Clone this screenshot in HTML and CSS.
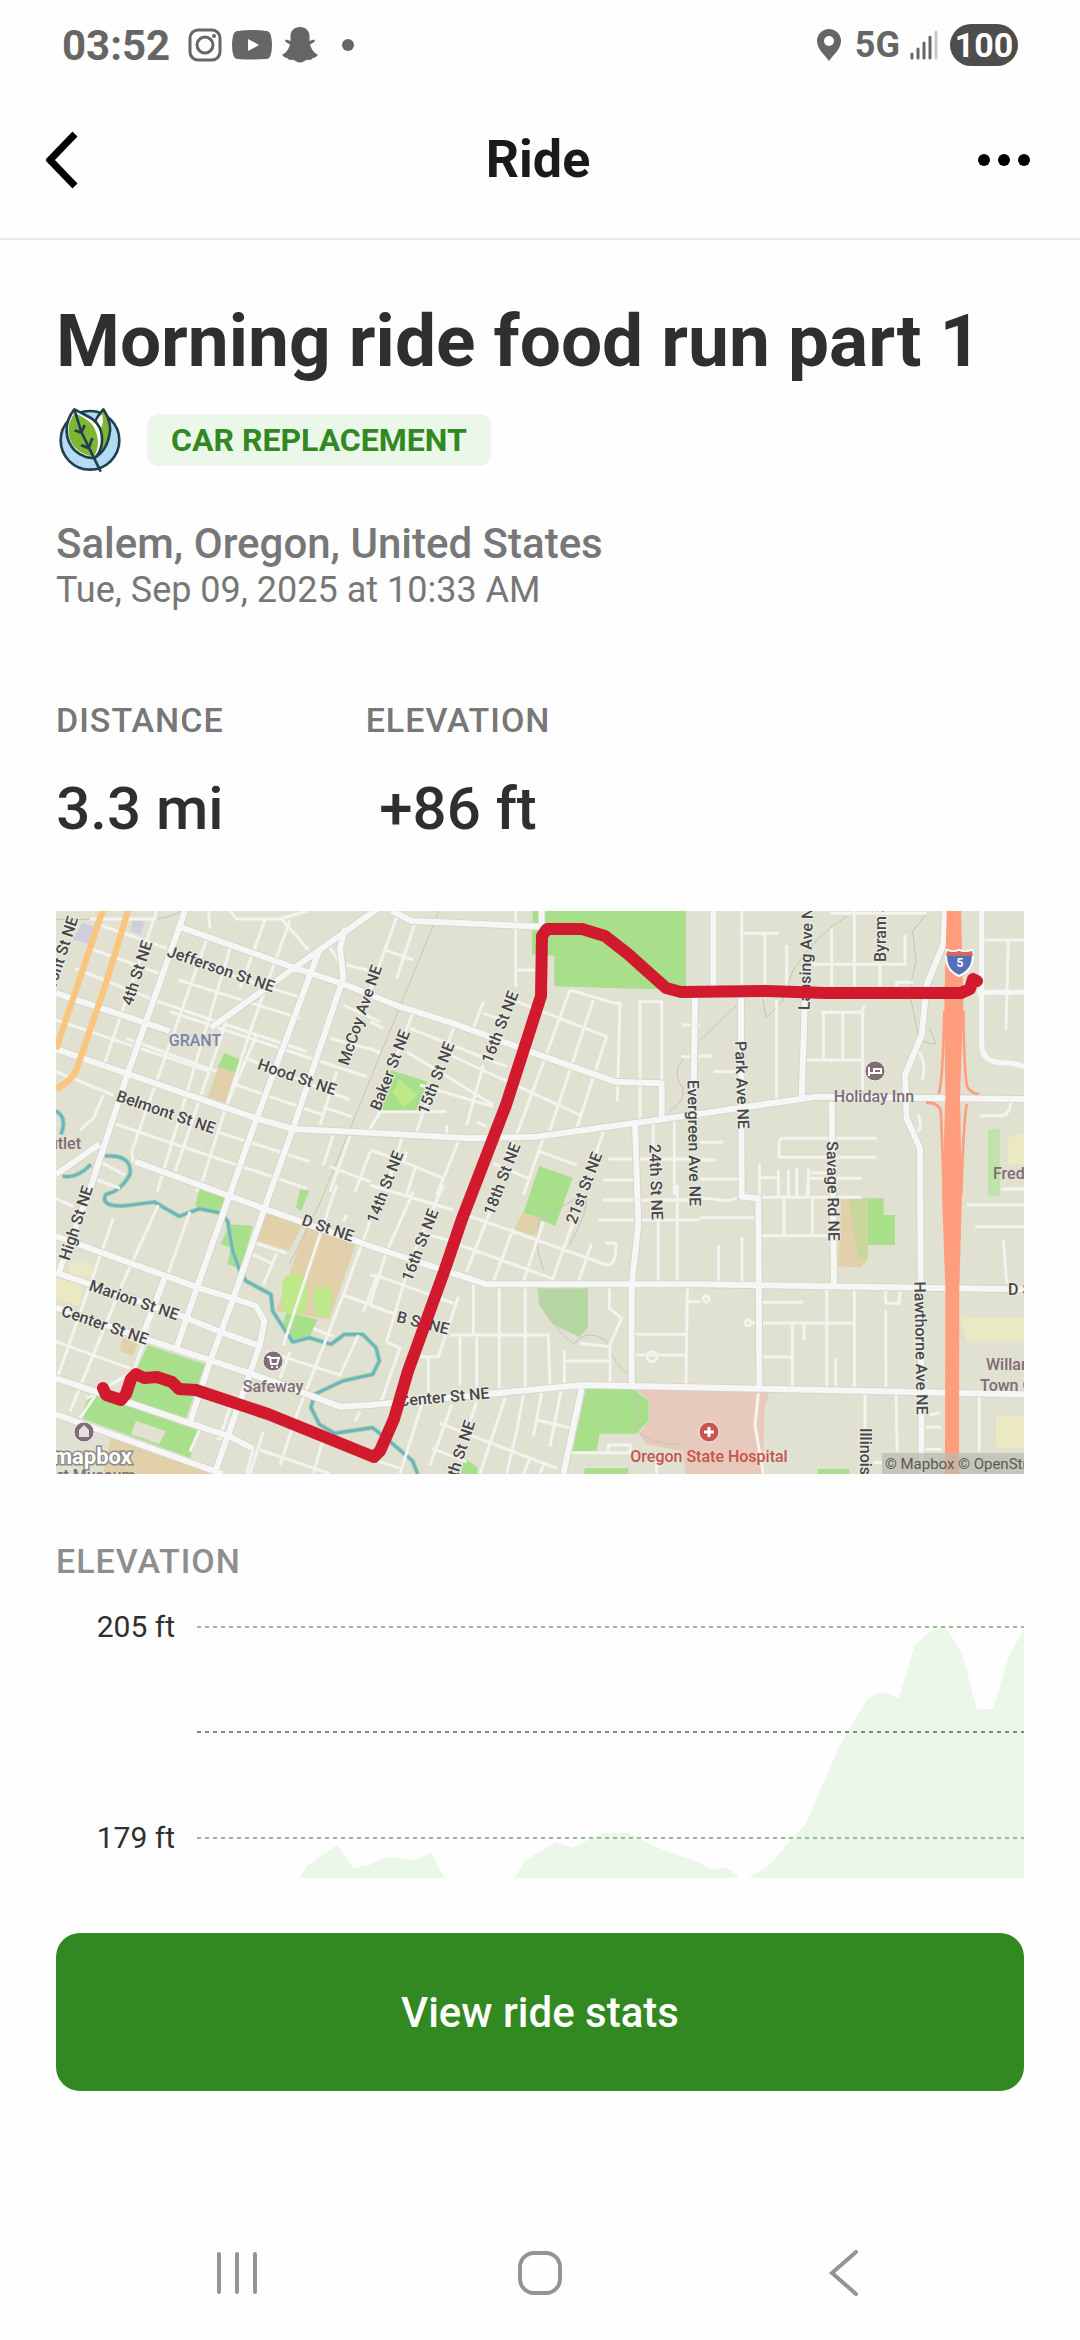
FILE: index.html
```html
<!DOCTYPE html>
<html lang="en">
<head>
    <meta charset="UTF-8">
    <meta name="viewport" content="width=device-width, initial-scale=1.0">
    <title>Ride</title>
    <link rel="stylesheet" href="styles.css">
</head>
<body>
    <div class="status-bar">
        <div class="status-left">
            <span class="clock">03:52</span>
            <svg width="34" height="34" viewBox="0 0 34 34" fill="none" stroke="#666" stroke-width="3"><rect x="2" y="2" width="30" height="30" rx="8"/><circle cx="17" cy="17" r="8"/><circle cx="26" cy="8" r="2" fill="#666" stroke="none"/></svg>
            <svg width="40" height="30" viewBox="0 0 40 30"><path d="M6 1Q20-1 34 1Q38 1 39 6Q41 15 39 24Q38 29 34 29Q20 30 6 29Q2 29 1 24Q-1 15 1 6Q2 1 6 1Z" fill="#666"/><path d="M16 9L27 15L16 21Z" fill="#fff"/></svg>
            <svg width="36" height="36" viewBox="0 0 36 36" fill="#666"><path d="M18 0C24 0 27.500 4 27.500 9V14L32 12.500Q34 14 31.500 15.500L28 17.500Q30 25 36 28Q34 31 30 31.500L29 33Q25 32 22.500 34Q18 37 13.500 34Q11 32 7 33L6 31.500Q2 31 0 28Q6 25 8 17.500L4.500 15.500Q2 14 4 12.500L8.500 14V9C8.500 4 12 0 18 0Z"/></svg>
            <span class="more-dot"></span>
        </div>
        <div class="status-right">
            <svg width="24" height="32" viewBox="0 0 24 32"><path d="M12 0A12 12 0 0 0 0 12C0 20 7 25 12 32C17 25 24 20 24 12A12 12 0 0 0 12 0Z" fill="#666"/><circle cx="12" cy="12" r="5" fill="#fff"/></svg>
            <span class="network">5G</span>
            <svg class="signal" width="28" height="30" viewBox="0 0 28 30" stroke="#666" stroke-width="3" stroke-linecap="round"><path d="M2 24V28M8 19V28M14 13V28M20 7V28"/><path d="M26 2V28" stroke="#c8c8c8"/></svg>
            <span class="battery">100</span>
        </div>
    </div>

    <header>
        <button class="icon-button" type="button" aria-label="Back">
            <svg width="32" height="58" viewBox="0 0 32 58" fill="none" stroke="#000" stroke-width="7"><path d="M29 3L4 29L29 55"/></svg>
        </button>
        <h1>Ride</h1>
        <button class="icon-button" type="button" aria-label="More options">
            <svg width="52" height="12" viewBox="0 0 52 12"><circle cx="6" cy="6" r="6"/><circle cx="26" cy="6" r="6"/><circle cx="46" cy="6" r="6"/></svg>
        </button>
    </header>

    <main>
        <h2>Morning ride food run part 1</h2>
        <div class="tags">
            <svg width="68" height="68" viewBox="49 48 204 204" stroke="#223f52" stroke-width="8" stroke-linejoin="round">
                <circle cx="151" cy="151" r="88" fill="#b3dcf3"/>
                <path d="M191 58C211 88 216 115 208 140C200 175 185 190 166 203C140 170 155 95 191 58Z" fill="#80b732"/>
                <path d="M188 72C160 95 168 115 180 130L190 95Z" fill="#fff" stroke="none"/>
                <path d="M104 58C70 100 76 150 104 180C125 200 150 206 166 203C190 180 192 140 180 113C165 83 140 78 104 58Z" fill="#fff"/>
                <path d="M106 68C77 105 82 150 110 176C128 192 150 200 164 198C182 165 175 135 162 110C148 88 125 80 106 68Z" fill="#80b732" stroke="none"/>
                <path d="M104 58L125 126L183 245M105 121L125 128L135 105M124 165L147 175L158 144" fill="none"/>
            </svg>
            <span class="badge">CAR REPLACEMENT</span>
        </div>
        <p class="place">Salem, Oregon, United States</p>
        <p class="date">Tue, Sep 09, 2025 at 10:33 AM</p>

        <div class="totals">
            <div class="total">
                <h3>DISTANCE</h3>
                <p>3.3 mi</p>
            </div>
            <div class="total">
                <h3>ELEVATION</h3>
                <p>+86 ft</p>
            </div>
        </div>

        <svg class="map" viewBox="0 0 968 563" role="img" aria-label="Map of the ride">
            <svg width="968" height="563" viewBox="0 0 2904 1689">
                <rect width="2904" height="1689" fill="#e0e1d1"/>

                <!-- parks and areas -->
                <g fill="#a7df8a">
                    <path d="M1430 0H1890V236L1690 232L1495 226V134L1428 130Z"/>
                    <path d="M505 425L553 447L538 485L485 468Z"/>
                    <path d="M1005 478L1115 512L1080 602H978L990 520Z"/>
                    <path d="M1450 765L1550 800L1498 945L1402 905Z"/>
                    <path d="M430 828L507 850L500 905L418 885ZM732 835L760 840L735 900L720 890ZM520 940L590 945L555 1075L515 1060L525 1010L494 1000Z"/>
                    <path d="M275 1302L447 1360L388 1525L205 1460ZM100 1445L430 1560L402 1640L75 1520Z"/>
                    <path d="M692 1205L785 1225L760 1280L710 1290L680 1240Z"/>
                    <path d="M1590 1432H1730L1778 1470V1530L1740 1568H1630L1622 1620H1550ZM1585 1672H1717V1689H1585ZM1225 1640L1265 1670V1689H1215Z"/>
                    <path d="M2435 862H2483V912H2517V1002H2435Z"/>
                    <path d="M2285 1674H2380V1689H2285Z"/>
                </g>
                <path d="M1445 1132H1596V1250L1570 1278L1490 1240L1448 1180Z" fill="#b7d7a2"/>
                <path d="M2797 655H2832V855H2797Z" fill="#bfe3a8"/>
                <path d="M1742 1435L2140 1440L2125 1500L2120 1689H1890L1880 1620L1770 1600L1750 1568L1780 1530V1470Z" fill="#e7cabc"/>
                <g fill="#e1d0aa">
                    <path d="M486 468L538 485L512 575L455 562ZM630 900L740 940L700 1018L605 990ZM750 950L900 998L820 1225L660 1200ZM165 1580L460 1675V1689H140ZM200 1280L245 1300L230 1335L192 1320ZM1400 905L1455 920L1435 975L1375 955Z"/>
                    <path d="M2355 862H2435V1048L2410 1070L2345 1066Z"/>
                </g>
                <path d="M2380 862H2435V1045H2410Q2385 960 2380 862Z" fill="#c9d69c"/>
                <g fill="#bde98a"><rect x="678" y="1088" width="75" height="125" rx="35"/><path d="M770 1130H830L820 1220L778 1210Z"/><path d="M1030 505L1085 550L1045 590L1010 545Z"/></g>
                <g fill="#ebe8c4"><path d="M2855 680L2904 665V760H2855ZM2715 1220H2904V1290H2730ZM2820 1515H2904V1610H2820ZM0 1100L80 1125L70 1185L0 1165ZM40 1055H110V1095L40 1090Z"/></g>
                <path d="M80 35L122 50L100 100L50 85ZM230 25L265 30L255 72L225 60Z" fill="#cfcedd"/>
                <path d="M240 1530L330 1560L310 1600L225 1570Z" fill="#e0e1d1"/>

                <!-- creek -->
                <g fill="none" stroke-linejoin="round">
                    <path d="M0 600Q35 620 15 670M20 795Q60 805 105 760M145 735Q230 730 222 790Q195 840 150 850Q130 885 200 885L295 873L370 916L430 893L490 905L515 930L530 1020L550 1075L570 1110L645 1150L650 1200L710 1293L760 1280L825 1300L865 1270H920L960 1310L970 1350L950 1390L860 1410L775 1450L765 1490L790 1540L835 1567L950 1550L1000 1590L1070 1650L1085 1689" stroke="#a0d596" stroke-width="14"/>
                    <path d="M0 600Q35 620 15 670M20 795Q60 805 105 760M145 735Q230 730 222 790Q195 840 150 850Q130 885 200 885L295 873L370 916L430 893L490 905L515 930L530 1020L550 1075L570 1110L645 1150L650 1200L710 1293L760 1280L825 1300L865 1270H920L960 1310L970 1350L950 1390L860 1410L775 1450L765 1490L790 1540L835 1567L950 1550L1000 1590L1070 1650L1085 1689" stroke="#6cb0cf" stroke-width="8"/>
                </g>

                <!-- trails and rail -->
                <g fill="none" stroke="#c4c5b8" stroke-width="3">
                    <path d="M0 25H290Q350 20 375 0M1149 0L790 880L700 1060M1540 1000Q1600 900 1590 850L1555 865L1450 925Q1430 1000 1465 1080M1450 1150Q1500 1270 1555 1298Q1590 1250 1650 1290Q1680 1370 1715 1387M1745 1440V1560Q1780 1600 1875 1600"/>
                    <path d="M2375 15Q2290 60 2210 180L2180 270L2130 320L2120 260M2040 285L1950 370L1930 390M2610 10L2570 60L2580 150L2560 240L2590 390L2640 400L2620 350M1895 430Q1840 480 1880 530Q1890 570 1840 600"/>
                </g>

                <!-- small streets -->
                <g fill="none" stroke="#f3f3ef" stroke-width="9">
                    <g transform="translate(-18 -18)">
                        <path d="M320 18L165 470M475 90L245 740L250 770M540 130L322 860M645 45L570 250M530 345L375 800M720 45L600 380L450 850M620 390L530 600M475 18L480 70M540 18L560 42H690L770 18M695 42L775 135M120 42H320"/>
                        <path d="M150 60L350 130M120 130L345 212M75 190L325 290L770 440M18 345L180 400L480 500M230 400L500 500M385 225L750 340M370 155L760 280M360 320L600 400L950 515M18 500L190 570M160 570L130 640L90 675M190 655L770 850M500 680L780 770M560 540L820 630M590 460L900 585M890 180L990 205M880 300L990 350M840 400L990 440M830 610L905 635M850 690L820 780M900 690L840 860M960 740L915 860M840 785L960 830M860 500L810 660M990 620L950 690M150 770L225 810M130 820L210 850M835 120L880 190"/>
                    </g>
                    <g transform="translate(942 -18)">
                        <path d="M80 35L0 260M135 55L80 220M45 135L130 165M437 18V245M437 195H500M340 290L310 370M340 325L400 345M440 290L710 395L620 670M600 255L440 690M670 285L535 690M600 255L735 295H750L742 590M810 650V290H875V530M130 320L80 450M250 370L225 440M120 370L410 485M110 440L370 600M240 450L630 630M150 540L370 605M340 480L290 660M180 560L140 680M30 620H230M230 660V690M320 650L350 665M0 735L100 770L220 820M95 700L50 850M265 710L200 870M135 790L110 870M110 740L100 775M370 775L475 820M510 740L620 780M520 700L460 870M430 710L410 760M700 680L670 770M850 650V740M913 650V870M715 762H990M700 825H790M935 360H990M935 455H990M0 350L40 370M0 430L30 445"/>
                    </g>
                    <g transform="translate(1932 -18)">
                        <path d="M125 18V250M130 85H235M195 85V245M260 120V245M395 70V245M463 18V245M330 178H615V90M540 178V245M390 25H680M590 245V232H640M230 285V580M370 460V322H485L495 300M428 322V460M315 465H488V555M488 322V465M655 440Q680 470 668 525M0 453H35M40 500H110M0 712H70M0 765H45M0 822H120M530 700H250Q237 700 237 720V757H530M178 775V870M178 818H235M235 795V870M265 795V870M290 790V870M325 790V870M325 803H400M325 820H485M855 105H972M925 105L918 375M933 590Q930 632 900 632H840M655 630Q670 670 650 680M905 852H972"/>
                    </g>
                    <g transform="translate(-18 822)">
                        <path d="M190 100L25 570M325 60L220 290L60 680M420 80L300 420M350 280L250 560L110 640M150 610L90 700M18 40L70 65M450 0L440 20M620 175L710 205M600 205L665 235M680 205L640 300M860 0L700 480M890 90L880 110M960 110L880 330L740 690L690 840M880 330L990 370M790 430L850 455M650 500L870 570L925 450M720 500L690 580M18 470L240 550M480 540L410 720M560 760L500 760M610 790L590 866M630 795L840 866M640 740L600 866M820 760L790 866M930 680L915 710M450 730L420 800M540 665L510 760M600 560L740 620"/>
                    </g>
                    <g transform="translate(942 822)">
                        <path d="M0 0L250 75M220 0L120 230L50 470L90 490L30 660M130 20L50 200L0 360M0 270L30 275L250 355M265 335L205 515H150M20 275L-20 380M0 360L80 390M290 90L710 240Q740 240 738 175H705M270 180L545 280M360 80L290 260M430 130L370 290M520 110L460 290M610 110L545 290M665 175L625 290M160 145L250 170M695 45H990M685 105H990M865 110V290M922 0V290M310 300V450M388 305V610M466 305V605M240 450H535L540 600M270 455V600M320 455V610M175 515V620M583 495V595M585 528H715M718 305V370L755 400L720 480V590M630 475L720 485M795 448H950M952 305L948 600M795 510H945M950 350H990M155 660L90 866M245 660L180 840M320 650L290 740M405 640L330 866M460 630L440 740L410 866M515 620L490 755M573 620L540 785M500 705L605 730M210 715L560 850M185 790L290 830M480 820L460 866M525 830L510 866M0 820L90 850M600 803H780V780H715V800M860 830V866"/>
                        <circle cx="846" cy="515" r="15"/>
                    </g>
                    <g transform="translate(1932 822)">
                        <path d="M0 40Q40 40 60 45Q90 50 110 38M175 37H485M0 98H165M56 180V290M126 155V290M252 40V150M337 40V150M185 152H385M265 0V35M235 0V35M290 0V35M322 0V35M800 60H972M825 125H972M910 165L920 295M905 12H972M185 352H310M155 414H460M312 414V465M380 310V605M463 310V605M277 414V605M185 516H277M407 520V605M557 310V355H597L600 320M557 375L558 605M495 625V730M588 625L592 800M677 727H725M670 793H725M690 690L720 682M838 635V800M520 833H545M175 625L165 720L190 866"/>
                        <circle cx="144" cy="414" r="9"/><circle cx="18" cy="342" r="9"/>
                    </g>
                </g>

                <!-- main streets: casing first, then fill -->
                <g fill="none" stroke-linejoin="round">
                    <path d="M387 0L217 482L100 840L10 1080M377 50L700 165L870 222L1032 287L1192 337L1422 422L1677 512L1817 517V620M0 246L340 360M0 414L602 622L712 654L972 667L1242 682L1442 677L1892 614L2282 557L2904 564M970 -10L800 110L465 350M792 112L602 622L422 1132L362 1310M868 50L852 110L862 200L712 650L640 850L532 1162L462 1352L400 1540M0 975L432 1132L532 1162L600 1185L625 1230L612 1300L582 1387L475 1689M0 1085L382 1217L492 1262L610 1305M0 1190L292 1292L582 1387L732 1442L852 1487L942 1482L1582 1422L2904 1450M237 752L622 892L942 1005L1292 1120H1932L2904 1135M0 1402L522 1577L590 1612M0 1510L500 1689M0 790L130 700M1007 0L1067 30L1452 47M1457 0V47M1917 250L1912 612M1737 637L1747 942L1727 1122V1422M1577 1432L1522 1689M1972 0V230M2055 260L2057 857L2107 862L2110 1432M2247 260L2237 560M2327 572L2334 1122M2667 0L2662 100L2612 222L2597 372L2547 492L2552 622L2592 712L2597 1689M330 1090L250 1300" stroke="#d3d4ca" stroke-width="23"/>
                    <path d="M387 0L217 482L100 840L10 1080M377 50L700 165L870 222L1032 287L1192 337L1422 422L1677 512L1817 517V620M0 246L340 360M0 414L602 622L712 654L972 667L1242 682L1442 677L1892 614L2282 557L2904 564M970 -10L800 110L465 350M792 112L602 622L422 1132L362 1310M868 50L852 110L862 200L712 650L640 850L532 1162L462 1352L400 1540M0 975L432 1132L532 1162L600 1185L625 1230L612 1300L582 1387L475 1689M0 1085L382 1217L492 1262L610 1305M0 1190L292 1292L582 1387L732 1442L852 1487L942 1482L1582 1422L2904 1450M237 752L622 892L942 1005L1292 1120H1932L2904 1135M0 1402L522 1577L590 1612M0 1510L500 1689M0 790L130 700M1007 0L1067 30L1452 47M1457 0V47M1917 250L1912 612M1737 637L1747 942L1727 1122V1422M1577 1432L1522 1689M1972 0V230M2055 260L2057 857L2107 862L2110 1432M2247 260L2237 560M2327 572L2334 1122M2667 0L2662 100L2612 222L2597 372L2547 492L2552 622L2592 712L2597 1689M330 1090L250 1300" stroke="#f6f6f6" stroke-width="18"/>
                    <path d="M2777 0V400Q2777 455 2840 455Q2880 455 2904 468M2765 244H2904" stroke="#f6f6f6" stroke-width="15"/>
                    <path d="M141 -5L0 415M217 -5L152 210L60 480Q50 505 0 535" stroke="#fac67f" stroke-width="19"/>
                    <path d="M2665 300Q2660 520 2648 548M2722 300Q2725 510 2735 530Q2750 550 2770 548M2610 575Q2655 575 2655 610L2664 850M2732 578Q2722 640 2716 850" stroke="#ff9d7c" stroke-width="8"/>
                </g>
                <path d="M2672 0H2715L2722 280L2712 560L2718 850L2710 1130L2709 1689H2667L2668 1130L2658 850L2668 560L2665 280Z" fill="#ff9d7c"/>
            </svg>

            <g class="street">
                <text transform="translate(17 6) rotate(-72)" class="to-end">Front St NE</text>
                <text transform="translate(81 62) rotate(-72)">4th St NE</text>
                <text transform="translate(165 58) rotate(19)">Jefferson St NE</text>
                <text transform="translate(110 201) rotate(19)">Belmont St NE</text>
                <text transform="translate(241 166) rotate(19)">Hood St NE</text>
                <text transform="translate(304 104) rotate(-71)">McCoy Ave NE</text>
                <text transform="translate(334 159) rotate(-69)">Baker St NE</text>
                <text transform="translate(380 167) rotate(-69)">15th St NE</text>
                <text transform="translate(444 116) rotate(-69)">16th St NE</text>
                <text transform="translate(446 268) rotate(-69)">18th St NE</text>
                <text transform="translate(329 276) rotate(-69)">14th St NE</text>
                <text transform="translate(528 277) rotate(-69)">21st St NE</text>
                <text transform="translate(600 271) rotate(88)">24th St NE</text>
                <text transform="translate(638 232) rotate(89)">Evergreen Ave NE</text>
                <text transform="translate(686 174) rotate(88)">Park Ave NE</text>
                <text transform="translate(748 99) rotate(-88)" class="from-start">Lansing Ave NE</text>
                <text transform="translate(824 51) rotate(-90)" class="from-start">Byram St NE</text>
                <text transform="translate(777 280) rotate(89)">Savage Rd NE</text>
                <text transform="translate(20 312) rotate(-72)">High St NE</text>
                <text transform="translate(272 317) rotate(19)">D St NE</text>
                <text transform="translate(78 389) rotate(19)">Marion St NE</text>
                <text transform="translate(49 414) rotate(19)">Center St NE</text>
                <text transform="translate(364 334) rotate(-69)">16th St NE</text>
                <text transform="translate(367 412) rotate(14)">B St NE</text>
                <text transform="translate(388 486) rotate(-5)">Center St NE</text>
                <text transform="translate(414 510) rotate(-72)" class="to-end">20th St NE</text>
                <text transform="translate(865 437) rotate(89)">Hawthorne Ave NE</text>
                <text transform="translate(809 517) rotate(90)" class="from-start">Illinois Ave</text>
                <text x="952" y="378" class="from-start">D St NE</text>
            </g>
            <text class="area" x="139" y="129">GRANT</text>

            <g class="poi">
                <circle cx="819" cy="160" r="10"/>
                <path d="M813 156V165M813 162H825V158H818V162" fill="none" stroke="#fff" stroke-width="2"/>
                <text x="818" y="185">Holiday Inn</text>
                <circle cx="217" cy="450" r="10"/>
                <path d="M211 446H214L215 453H221L223 447H215M216 455V457M221 455V457" fill="none" stroke="#fff" stroke-width="2"/>
                <text x="217" y="475">Safeway</text>
                <circle cx="28" cy="521" r="10"/>
                <path d="M23 519L28 514L33 519V526H23Z" fill="#e5e0e0"/>
                <text x="35" y="564">Art Museum</text>
                <text x="25" y="232" class="to-end">Outlet</text>
                <text x="937" y="262" class="from-start">Fred Meyer</text>
                <text x="930" y="453" class="from-start">Willamette</text>
                <text x="924" y="474" class="from-start">Town Center</text>
            </g>
            <g class="hospital">
                <circle cx="653" cy="521" r="10"/>
                <path d="M653 516V526M648 521H658" stroke="#fff" stroke-width="3"/>
                <text x="653" y="545">Oregon State Hospital</text>
            </g>

            <!-- interstate shield -->
            <path d="M891 39Q897 42 903 39Q909 42 916 39Q920 58 903 65Q887 58 891 39Z" fill="#536fb8" stroke="#fff" stroke-width="2"/>
            <path d="M891 40Q897 42 903 40Q909 42 916 40L917 45H890Z" fill="#cf6864"/>
            <text class="shield" x="904" y="52">5</text>

            <!-- recorded track -->
            <path class="track" d="M47 477L50 484L65 489L70 483L75 468L80 463L88 467L101 466L116 471L123 478L140 479L212 503L318 546L324 540L338 508L352 460L388 361L406 308L450 194L485 85L486 25L491 18H526L549 25L572 43L610 77L625 81L710 80L770 82H905L914 78L917 68L921 70"/>

            <text class="logo" x="76" y="545">mapbox</text>
            <rect x="826" y="542" width="142" height="21" fill="#b9b9ae" fill-opacity="0.7"/>
            <text class="credit" x="829" y="553">© Mapbox © OpenStreetMap</text>
        </svg>

        <h3 class="chart-title">ELEVATION</h3>
        <div class="chart">
            <div class="axis">
                <span>205 ft</span>
                <span>179 ft</span>
            </div>
            <svg viewBox="0 0 827 252" preserveAspectRatio="none" role="img" aria-label="Elevation chart">
                <path fill="#ebf7e9" d="M102 252L110 240L140 219L156 242L173 239L186 232H201L218 234L234 227L248 252ZM318 252L327 235L359 216L375 222L397 211L407 207H432L440 211L456 220L480 229L499 235L516 244L529 241L543 252ZM551 252Q566 244 578 233L596 211L609 198L625 160L642 121L652 103L671 72Q678 68 686 66L702 72L718 18L735 5L748 0L765 27L780 83H796L811 32L827 3V252Z"/>
                <g fill="none" stroke-dasharray="4 4" stroke-width="2">
                    <path d="M0 1H827M0 212H827" stroke="#98bd94"/>
                    <path d="M0 106H827" stroke="#78916f"/>
                </g>
            </svg>
        </div>

        <button class="stats-button" type="button">View ride stats</button>
    </main>

    <nav>
        <button class="icon-button" type="button" aria-label="Recent apps">
            <svg width="46" height="46" viewBox="0 0 46 46" stroke="#949494" stroke-width="4" stroke-linecap="round"><path d="M5 4V42M23 4V42M41 4V42"/></svg>
        </button>
        <button class="icon-button" type="button" aria-label="Home">
            <svg width="46" height="46" viewBox="0 0 46 46" fill="none" stroke="#949494" stroke-width="4"><rect x="3" y="3" width="40" height="40" rx="14"/></svg>
        </button>
        <button class="icon-button" type="button" aria-label="Back">
            <svg width="46" height="46" viewBox="0 0 46 46" fill="none" stroke="#949494" stroke-width="4" stroke-linecap="round"><path d="M36 2L12 23L36 44"/></svg>
        </button>
    </nav>
</body>
</html>
```

FILE: styles.css
```css
* {
    box-sizing: border-box;
}
body {
    font-family: Roboto, Arial, sans-serif;
    background-color: #fefefe;
    color: #2f2f2f;
    margin: 0;
    min-height: 100vh;
    display: flex;
    flex-direction: column;
}
h1, h2, h3, p {
    margin: 0;
}
svg {
    display: block;
}
.icon-button {
    background: none;
    border: none;
    padding: 0;
    cursor: pointer;
}

/* phone status bar */
.status-bar {
    display: flex;
    justify-content: space-between;
    align-items: center;
    height: 90px;
    padding: 0 62px;
    color: #666;
    font-weight: bold;
}
.status-left, .status-right {
    display: flex;
    align-items: center;
    gap: 10px;
}
.clock {
    font-size: 42px;
    margin-right: 8px;
}
.more-dot {
    width: 12px;
    height: 12px;
    border-radius: 50%;
    background-color: #666;
    margin-left: 14px;
}
.network {
    font-size: 36px;
    margin-left: 4px;
}
.battery {
    display: flex;
    align-items: center;
    justify-content: center;
    width: 68px;
    height: 42px;
    border-radius: 21px;
    background-color: #4d4d4d;
    color: #fff;
    font-size: 34px;
    margin-left: 2px;
}

header {
    display: flex;
    justify-content: space-between;
    align-items: center;
    height: 150px;
    padding: 0 50px 8px 46px;
    border-bottom: 2px solid #e8e8e8;
}
header .icon-button {
    display: flex;
    width: 52px;
}
h1 {
    font-size: 52px;
    line-height: 64px;
    color: #1a1a1a;
}

main {
    padding: 59px 56px 0;
}
h2 {
    font-size: 73px;
    line-height: 84px;
}
.tags {
    display: flex;
    align-items: center;
    gap: 23px;
    margin-top: 23px;
}
.badge {
    background-color: #ebf7e9;
    color: #328821;
    font-size: 32px;
    font-weight: bold;
    line-height: 52px;
    padding: 0 24px;
    border-radius: 12px;
}
.place, .date {
    color: #777;
    line-height: 46px;
}
.place {
    font-size: 42px;
    font-weight: 500;
    margin-top: 47px;
}
.date {
    font-size: 36px;
}
h3 {
    color: #777;
    font-size: 34px;
    font-weight: 500;
    line-height: 40px;
    letter-spacing: 1px;
}
.totals {
    display: flex;
    gap: 142px;
    margin-top: 87px;
}
.total {
    text-align: center;
}
.total p {
    font-size: 60px;
    font-weight: 500;
    line-height: 70px;
    margin-top: 34px;
}

/* map */
.map {
    width: 100%;
    height: auto;
    margin-top: 67px;
    overflow: hidden;
}
.map text {
    font-size: 16px;
    text-anchor: middle;
    dominant-baseline: central;
}
.map .from-start {
    text-anchor: start;
}
.map .to-end {
    text-anchor: end;
}
.street text {
    fill: #474749;
    font-weight: 500;
    stroke: #eeeee6;
    stroke-width: 2px;
    paint-order: stroke;
}
.map .area {
    fill: #7883a8;
    font-weight: 500;
}
.poi {
    fill: #806c75;
    font-weight: 500;
}
.hospital {
    fill: #c9534f;
    font-weight: 500;
}
.poi circle, .hospital circle {
    stroke: #f0ece8;
}
.map .shield {
    fill: #fff;
    font-size: 12px;
    font-weight: bold;
}
.track {
    fill: none;
    stroke: #d11a2d;
    stroke-width: 12px;
    stroke-linecap: round;
    stroke-linejoin: round;
}
.map .logo {
    fill: #fff;
    stroke: #8b8b86;
    stroke-width: 3px;
    paint-order: stroke;
    font-size: 22px;
    font-weight: bold;
    text-anchor: end;
}
.map .credit {
    fill: #595959;
    font-size: 15px;
    text-anchor: start;
}

/* elevation chart */
.chart-title {
    color: #8e8e8e;
    margin-top: 67px;
}
.chart {
    display: flex;
    gap: 22px;
    margin-top: 45px;
}
.axis {
    display: flex;
    flex-direction: column;
    justify-content: space-between;
    width: 119px;
    height: 246px;
    margin-top: -17px;
    font-size: 30px;
    line-height: 35px;
    text-align: right;
}
.chart svg {
    flex: 1;
    min-width: 0;
    height: 252px;
}

.stats-button {
    display: block;
    width: 100%;
    height: 158px;
    margin-top: 55px;
    border: none;
    border-radius: 24px;
    background-color: #328821;
    color: #fff;
    font-family: inherit;
    font-size: 42px;
    font-weight: 500;
    cursor: pointer;
}

/* android navigation */
nav {
    display: flex;
    justify-content: space-around;
    align-items: center;
    height: 134px;
    margin-top: auto;
    padding: 0 86px;
}
```
